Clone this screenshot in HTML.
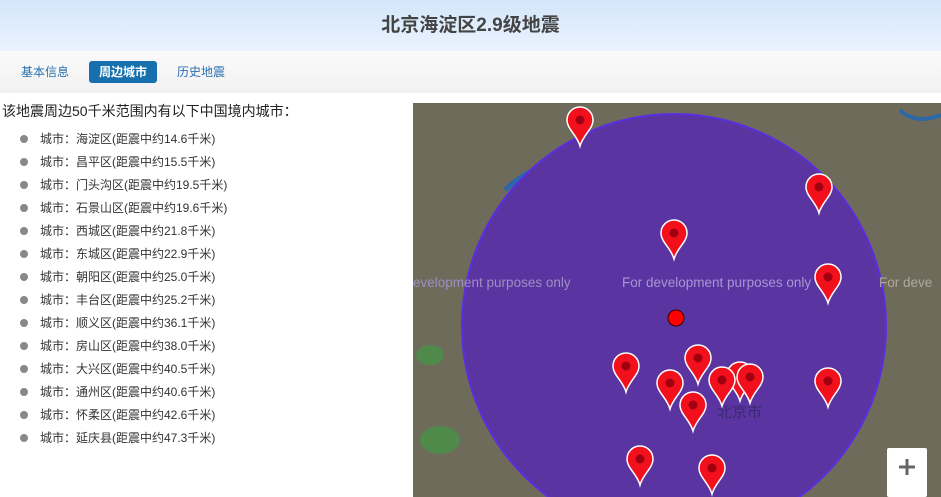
<!DOCTYPE html>
<html><head><meta charset="utf-8"><style>
*{margin:0;padding:0;box-sizing:border-box}
html,body{width:941px;height:497px;overflow:hidden}
body{background:#fff;font-family:"Liberation Sans","Noto Sans CJK SC",sans-serif;position:relative}
.hd{position:absolute;left:0;top:0;width:941px;height:51px;background:linear-gradient(#d4e6fa,#e9f3fe);text-align:center;font-size:19px;font-weight:bold;color:#444;line-height:51px}
.tabs{position:absolute;left:0;top:51px;width:941px;height:42px;background:linear-gradient(#fafafa,#f2f2f2)}
.tab{position:absolute;top:10px;height:22px;line-height:22px;font-size:12px;color:#2a6fb0}
.act{background:#176fad;color:#fff;font-weight:bold;border-radius:3px;padding:0 10px}
.intro{position:absolute;left:2px;top:101px;font-size:14px;color:#222}
ul{position:absolute;left:0;top:130px;list-style:none}
li{height:23px;font-size:12px;color:#333;padding-left:40px;position:relative;line-height:18px}
li:before{content:"";position:absolute;left:20px;top:5px;width:8px;height:8px;border-radius:50%;background:#888}
.map{position:absolute;left:413px;top:103px;width:528px;height:394px;overflow:hidden;background:#6f6b5b}
svg{display:block}
</style></head><body>
<div class="hd">北京海淀区2.9级地震</div>
<div class="tabs">
<div class="tab" style="left:21px">基本信息</div>
<div class="tab act" style="left:89px">周边城市</div>
<div class="tab" style="left:177px">历史地震</div>
</div>
<div class="intro">该地震周边50千米范围内有以下中国境内城市：</div>
<ul>
<li>城市：海淀区(距震中约14.6千米)</li>
<li>城市：昌平区(距震中约15.5千米)</li>
<li>城市：门头沟区(距震中约19.5千米)</li>
<li>城市：石景山区(距震中约19.6千米)</li>
<li>城市：西城区(距震中约21.8千米)</li>
<li>城市：东城区(距震中约22.9千米)</li>
<li>城市：朝阳区(距震中约25.0千米)</li>
<li>城市：丰台区(距震中约25.2千米)</li>
<li>城市：顺义区(距震中约36.1千米)</li>
<li>城市：房山区(距震中约38.0千米)</li>
<li>城市：大兴区(距震中约40.5千米)</li>
<li>城市：通州区(距震中约40.6千米)</li>
<li>城市：怀柔区(距震中约42.6千米)</li>
<li>城市：延庆县(距震中约47.3千米)</li>
</ul>
<div class="map">
<svg width="528" height="394" viewBox="413 103 528 394" xmlns="http://www.w3.org/2000/svg">
<defs><g id="p"><path d="M0,25 C-3,14 -13,8 -13,-1 A13,13 0 1 1 13,-1 C13,8 3,14 0,25Z" fill="#f2101c" stroke="#fff" stroke-width="1.5"/><circle cx="0" cy="-1" r="4.5" fill="#a00010"/></g></defs>
<path d="M505,190 Q520,175 545,165" stroke="#2a68a8" fill="none" stroke-width="5"/>
<path d="M900,110 Q915,125 941,115" stroke="#2a68a8" fill="none" stroke-width="4"/>
<ellipse cx="430" cy="355" rx="14" ry="10" fill="#4f8a4a"/>
<ellipse cx="440" cy="440" rx="20" ry="14" fill="#4f8a4a"/>
<circle cx="674" cy="326" r="212" fill="#5a35a2" stroke="#5a2ee0" stroke-width="2"/>
<text x="413" y="287" font-size="13.5" fill="#9d8fbf" font-family="Liberation Sans">evelopment purposes only</text>
<text x="622" y="287" font-size="13.5" fill="#a996d0" font-family="Liberation Sans">For development purposes only</text>
<text x="879" y="287" font-size="13.5" fill="#b0a8a0" font-family="Liberation Sans">For deve</text>
<text x="717" y="417" font-size="15" fill="#3a2a70" font-family="Noto Sans CJK SC">北京市</text>
<circle cx="676" cy="318" r="8" fill="#f00" stroke="#300" stroke-width="1"/>
<use href="#p" x="580" y="121"/><use href="#p" x="674" y="234"/><use href="#p" x="819" y="188"/>
<use href="#p" x="828" y="278"/><use href="#p" x="626" y="367"/><use href="#p" x="698" y="359"/>
<use href="#p" x="740" y="376"/><use href="#p" x="750" y="378"/><use href="#p" x="722" y="381"/>
<use href="#p" x="670" y="384"/><use href="#p" x="828" y="382"/><use href="#p" x="693" y="406"/>
<use href="#p" x="640" y="460"/><use href="#p" x="712" y="469"/>
<rect x="887" y="448" width="40" height="49" fill="#fff" rx="2"/>
<path d="M907,459 V475 M899,467 H915" stroke="#666" stroke-width="3"/>
</svg>
</div>
</body></html>
